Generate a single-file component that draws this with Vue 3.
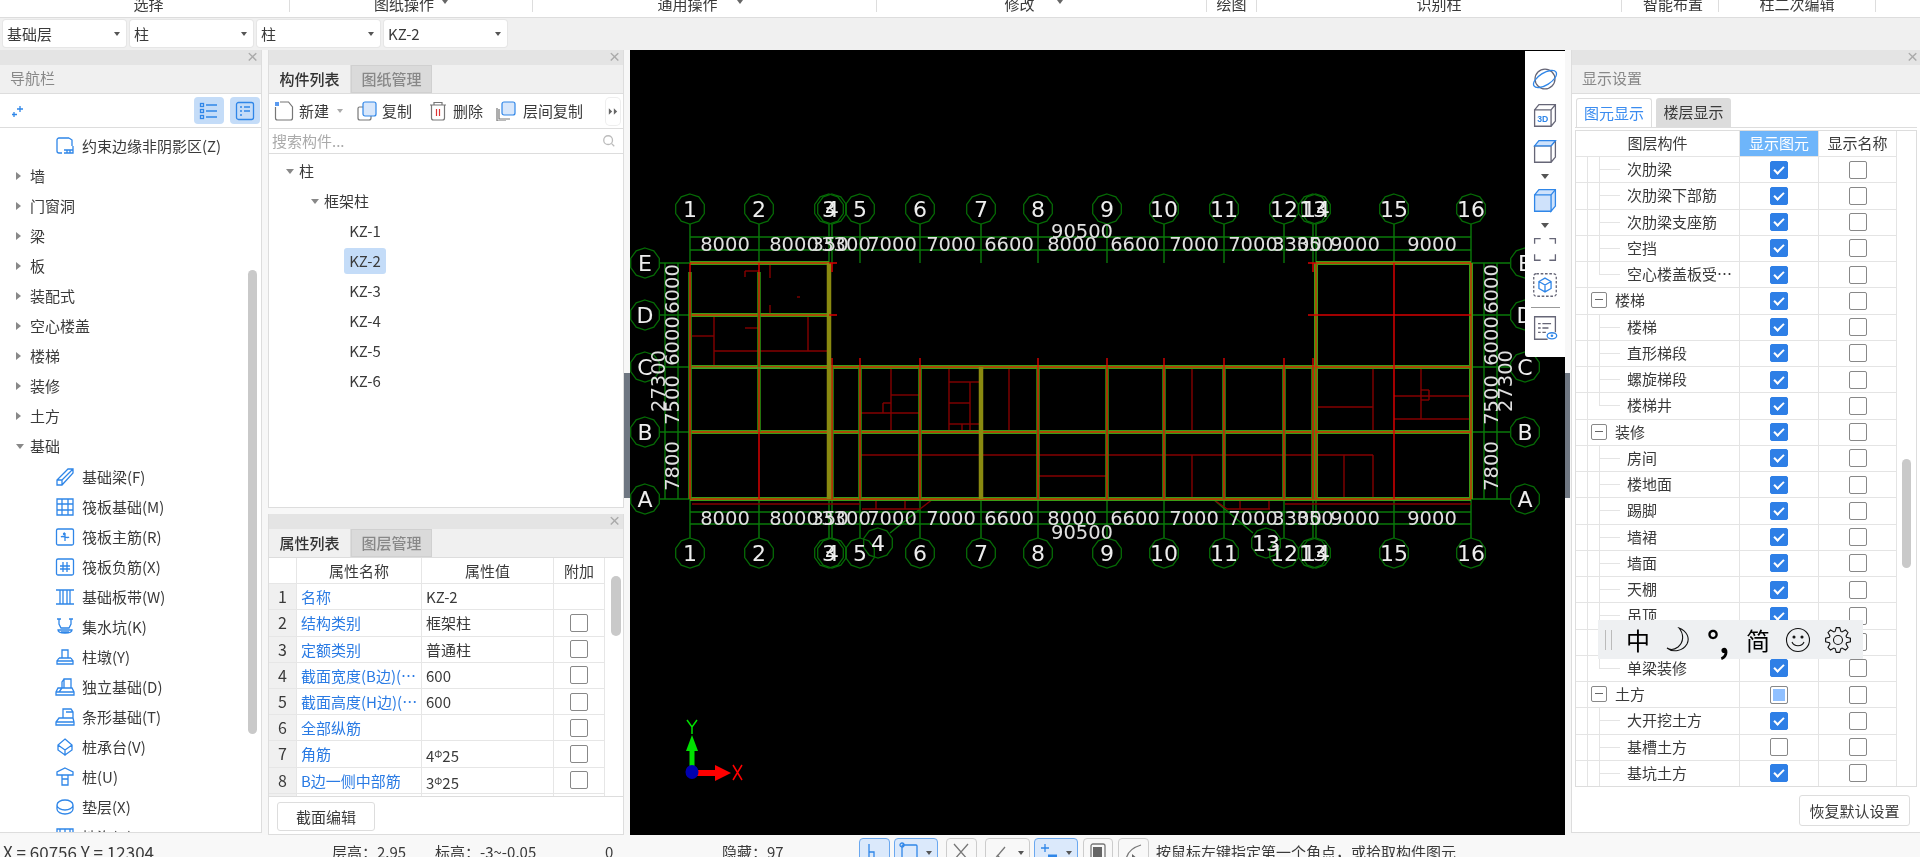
<template>
  <div class="app">
    <div class="ribbon">
      <div v-for="s in ribbon" :key="s.t" class="ribbon-sec" :style="{ width: s.w + 'px', paddingLeft: (s.pl || 0) + 'px', paddingRight: (s.pr || 0) + 'px' }">{{ s.t }}<span v-if="s.c" class="mini-caret" :style="{ marginLeft: s.c + 'px' }"></span></div>
    </div>

    <div class="selectors">
      <div v-for="(s, i) in selectors" :key="i" class="select">{{ s }}<span class="caret"></span></div>
    </div>

    <div class="workspace">
      <!-- 导航栏 -->
      <section class="panel nav">
        <div class="grip"><span class="close">×</span></div>
        <div class="title">导航栏</div>
        <div class="nav-tools">
          <svg class="sparkle" viewBox="0 0 14 14"><path d="M9 2v6M6 5h6M3 8v5M1 10.5h5" /></svg>
          <span class="tool-on"><svg viewBox="0 0 20 20"><path d="M7 4h11M7 10h11M7 16h11" /><rect x="1.5" y="2.5" width="3" height="3" /><rect x="1.5" y="8.5" width="3" height="3" /><rect x="1.5" y="14.5" width="3" height="3" /></svg></span>
          <span class="tool-on"><svg viewBox="0 0 20 20"><rect x="1.5" y="1.5" width="17" height="17" rx="2" /><path d="M5 6h2M9 6h6M5 10h2M9 10h6M5 14h2" /></svg></span>
        </div>
        <div class="nav-list">
          <div v-for="n in navItems" :key="n.t" class="nav-row" :class="{ sub: n.icon }">
            <span v-if="n.arrow" class="arrow" :class="n.arrow"></span>
            <svg v-if="n.icon" class="nav-icon" viewBox="0 0 20 20"><path :d="icons[n.icon]" /></svg>
            <span>{{ n.t }}</span>
          </div>
          <div class="nav-scroll"></div>
        </div>
      </section>

      <div class="mid">
        <section class="panel parts">
          <div class="grip"><span class="close">×</span></div>
          <div class="tabs">
            <span class="tab on">构件列表</span><span class="tab">图纸管理</span>
          </div>
          <div class="part-tools">
            <svg class="t-icon" viewBox="0 0 20 20"><path class="grey" d="M1.5 6v11a2 2 0 0 0 2 2h13a2 2 0 0 0 2-2V6l-4-5H6" /><rect class="blue-fill" x="1" y="1" width="4" height="4" /></svg>
            <span class="t-txt">新建</span><span class="caret light"></span>
            <svg class="t-icon copy" viewBox="0 0 20 20"><path class="grey" d="M6 6H2.5A1.5 1.5 0 0 0 1 7.500V17a2 2 0 0 0 2 2h9a2 2 0 0 0 2-2v-2" /><rect class="blue-soft" x="6" y="1" width="13" height="14" rx="2" /></svg>
            <span class="t-txt">复制</span>
            <svg class="t-icon del" viewBox="0 0 20 20"><path class="grey" d="M2 4h16M6 4V1.500h8V4M3.500 4v13a2 2 0 0 0 2 2h9a2 2 0 0 0 2-2V4" /><path class="red" d="M8.500 8v7M11.500 8v7" /></svg>
            <span class="t-txt">删除</span>
            <svg class="t-icon floor" viewBox="0 0 20 20"><path class="grey" d="M3 8v10h11M1 7v13h9" /><rect class="blue-soft" x="6" y="1" width="13" height="13" rx="2" /></svg>
            <span class="t-txt">层间复制</span>
            <span class="more"><svg viewBox="0 0 12 10"><path d="M1 1l4 4-4 4zM7 1l4 4-4 4z" /></svg></span>
          </div>
          <div class="search">
            <span>搜索构件...</span>
            <svg viewBox="0 0 16 16"><circle cx="7" cy="7" r="5" /><path d="M11 11l3 3" /></svg>
          </div>
          <div class="tree">
            <div class="tree-row lvl0"><span class="arrow down"></span>柱</div>
            <div class="tree-row lvl1"><span class="arrow down"></span>框架柱</div>
            <div v-for="k in kz" :key="k" class="tree-row lvl2"><span class="kz" :class="{ sel: k === 'KZ-2' }">{{ k }}</span></div>
          </div>
        </section>

        <section class="panel props">
          <div class="grip"><span class="close">×</span></div>
          <div class="tabs">
            <span class="tab on">属性列表</span><span class="tab">图层管理</span>
          </div>
          <div class="prop-wrap">
            <div class="prop-table">
              <div class="prop-row head"><span></span><span>属性名称</span><span>属性值</span><span>附加</span></div>
              <div v-for="(p, i) in propRows" :key="p.n" class="prop-row">
                <span class="num">{{ i + 1 }}</span>
                <span class="pname">{{ p.n }}</span>
                <span class="pval">{{ p.v }}<small v-if="p.bar">Φ</small>{{ p.bar }}</span>
                <span class="pchk"><i v-if="i > 0" class="box"></i></span>
              </div>
            </div>
            <div class="prop-scroll"><i></i></div>
          </div>
          <div class="prop-foot"><button class="btn">截面编辑</button></div>
        </section>
      </div>

      <div class="splitter"></div>

      <!-- CAD 绘图区 -->
      <div class="canvas">
        <svg class="drawing" viewBox="630 50 935 785" width="935" height="785">
          <g class="axis">
            <line x1="690" y1="237" x2="1471" y2="237" /><line x1="690" y1="250" x2="1471" y2="250" />
            <line x1="690" y1="512" x2="1471" y2="512" /><line x1="690" y1="524" x2="1471" y2="524" />
            <line x1="665" y1="263" x2="665" y2="499" /><line x1="678" y1="263" x2="678" y2="499" />
            <line x1="1484" y1="263" x2="1484" y2="499" /><line x1="1497" y1="263" x2="1497" y2="499" />
            <template v-for="c in cols" :key="'c' + c.n">
              <line :x1="c.x" y1="224" :x2="c.x" y2="263" />
              <line :x1="c.x" y1="499" :x2="c.x" y2="538" />
            </template>
            <template v-for="r in rows" :key="'r' + r.n">
              <line x1="660" :y1="r.y" x2="690" :y2="r.y" />
              <line x1="1471" :y1="r.y" x2="1510" :y2="r.y" />
            </template>
            <line x1="920" y1="509" x2="890" y2="533" /><line x1="1213" y1="499" x2="1253" y2="533" />
          </g>
          <g class="thin-red">
            <line v-for="(l, i) in darkLines" :key="'d' + i" :x1="l[0]" :y1="l[1]" :x2="l[2]" :y2="l[3]" />
          </g>
          <g class="beam">
            <line v-for="(l, i) in beams" :key="'o' + i" :x1="l[0]" :y1="l[1]" :x2="l[2]" :y2="l[3]" />
          </g>
          <g class="beam-core">
            <line v-for="(l, i) in beams" :key="'k' + i" :x1="l[0]" :y1="l[1]" :x2="l[2]" :y2="l[3]" />
          </g>
          <g class="col-green">
            <line v-for="(l, i) in colBeams" :key="'g' + i" :x1="l[0]" :y1="l[1]" :x2="l[2]" :y2="l[3]" />
          </g>
          <g class="col-red">
            <line v-for="(l, i) in colBeams" :key="'r' + i" :x1="l[0]" :y1="l[1] - 9" :x2="l[2]" :y2="l[3]" />
          </g>
          <g class="beam-thick">
            <line x1="829" y1="263" x2="829" y2="499" /><line x1="981" y1="367" x2="981" y2="499" />
          </g>
          <g class="bright-red">
            <line v-for="(l, i) in redLines" :key="'b' + i" :x1="l[0]" :y1="l[1]" :x2="l[2]" :y2="l[3]" />
          </g>
          <line x1="692" y1="368" x2="780" y2="368" stroke="#33b533" stroke-width="1" />
          <g class="tags">
            <polygon v-for="b in bubbles" :key="'p' + b.t + b.x + b.y" :points="deca(b.x, b.y)" />
          </g>
          <g class="bubble-text">
            <text v-for="b in bubbles" :key="'t' + b.t + b.x + b.y" :x="b.x" :y="b.y + 8">{{ b.t }}</text>
          </g>
          <g class="dim">
            <text v-for="(d, i) in dimsH" :key="'h' + i" :x="d[0]" y="251">{{ d[1] }}</text>
            <text v-for="(d, i) in dimsH" :key="'j' + i" :x="d[0]" y="525">{{ d[1] }}</text>
            <text x="1082" y="238">90500</text>
            <text x="1082" y="539">90500</text>
            <text v-for="d in dimsV" :key="'vl' + d[0]" :transform="`translate(679 ${d[0]}) rotate(-90)`">{{ d[1] }}</text>
            <text v-for="d in dimsV" :key="'vr' + d[0]" :transform="`translate(1498 ${d[0]}) rotate(-90)`">{{ d[1] }}</text>
            <text transform="translate(665 381) rotate(-90)">27300</text>
            <text transform="translate(1512 381) rotate(-90)">27300</text>
          </g>
          <g>
            <line x1="692" y1="772" x2="692" y2="750" stroke="#00e000" stroke-width="5" />
            <polygon points="692,735 686,751 698,751" fill="#00e000" />
            <line x1="692" y1="773" x2="716" y2="773" stroke="#f00" stroke-width="6" />
            <polygon points="731,773 715,765 715,781" fill="#f00" />
            <ellipse cx="692" cy="772" rx="6.500" ry="7" fill="#0000b0" />
            <path d="M687 720l5 7 5-7M692 727v7" stroke="#00e000" stroke-width="1.500" fill="none" />
            <path d="M733 765l9 15M742 765l-9 15" stroke="#f00" stroke-width="1.500" fill="none" />
          </g>
        </svg>

        <div class="view-tools">
          <svg viewBox="0 0 30 30"><circle cx="15" cy="15" r="11.500" class="g" /><ellipse cx="15" cy="15" rx="15" ry="7" transform="rotate(-32 15 15)" class="b" /></svg>
          <svg viewBox="0 0 30 30"><path class="g" d="M3 9h19v19H3zM3 9l5-6h19v19l-5 6M22 9l5-6" /><text x="12.500" y="23" class="t3d">3D</text></svg>
          <svg viewBox="0 0 30 30"><path class="g" d="M3 9h19v19H3zM22 28l5-6V3M22 9l5-6" /><path class="sf" d="M3 9l5-6h19l-5 6z" /></svg>
          <span class="dn"></span>
          <svg viewBox="0 0 30 30"><path class="sf" d="M3 9h19v19H3zM3 9l5-6h19v19l-5 6V9" /><path class="b" d="M22 9l5-6" /></svg>
          <span class="dn"></span>
          <svg viewBox="0 0 30 30"><path class="g" d="M3 9V3h7M20 3h7v6M27 21v7h-7M10 28H3v-7" /></svg>
          <svg viewBox="0 0 30 30"><rect class="g dash" x="2" y="2" width="26" height="26" rx="3" /><path class="b" d="M15 7l7 4v8l-7 4-7-4v-8zM8 11l7 4 7-4M15 15v8" /></svg>
          <i class="sep"></i>
          <svg viewBox="0 0 30 30"><path class="g" d="M18 28H3V2h24v18M7 10h3M12 10h10M7 15h3M12 15h7M7 20h3M12 20h4" /><ellipse class="b" cx="23" cy="24" rx="5.500" ry="3.500" /><circle cx="23" cy="24" r="1.500" fill="#2f86e8" /></svg>
        </div>
      </div>

      <div class="splitter right"></div>

      <!-- 显示设置 -->
      <section class="panel display">
        <div class="grip"><span class="close">×</span></div>
        <div class="title">显示设置</div>
        <div class="display-body">
          <div class="d-tabs"><span class="d-tab on">图元显示</span><span class="d-tab">楼层显示</span></div>
          <div class="d-table">
            <div class="d-main">
              <div class="d-row head">
                <span>图层构件</span><span class="hl">显示图元</span><span>显示名称</span>
              </div>
              <div v-for="(r, i) in layerRows" :key="i" class="d-row">
                <span class="d-name" :class="r.kind"><i v-if="r.kind === 'parent'" class="minus"></i>{{ r.t }}</span>
                <span class="d-c"><i class="box lg" :class="r.s"></i></span>
                <span class="d-c"><i class="box lg"></i></span>
              </div>
            </div>
            <div class="d-scroll"><i></i></div>
          </div>
          <div class="d-foot"><button class="btn wide">恢复默认设置</button></div>
        </div>
      </section>
    </div>

    <div class="status">
      <span class="st coord">X = 60756 Y = 12304</span>
      <span class="st h1">层高：2.95</span>
      <span class="st h2">标高：-3~-0.05</span>
      <span class="st h3">0</span>
      <span class="st h4">隐藏：97</span>
      <span class="snap on w31"><svg viewBox="0 0 20 20"><path d="M5 2v14h9M5 10h5v6" /></svg></span>
      <span class="snap on w44"><svg viewBox="0 0 20 20"><rect x="3" y="3" width="15" height="18" rx="1" /><circle cx="3" cy="3" r="2" /></svg><b></b></span>
      <span class="snap w31 grey-s gap"><svg viewBox="0 0 20 20"><path d="M3 2l14 16M17 2L3 18" /></svg></span>
      <span class="snap w45 grey-s gap"><svg viewBox="0 0 20 20"><path d="M4 18L15 5M7 13l3 3" /></svg><b></b></span>
      <span class="snap on w44"><svg viewBox="0 0 20 20"><path d="M6 2v8M2 6h8" /><path class="thick" d="M9 14h9" /></svg><b></b></span>
      <span class="snap w30 grey-s gap1"><svg viewBox="0 0 20 20"><rect x="3" y="2" width="14" height="18" rx="2" /><rect class="solid" x="5" y="5" width="9" height="14" /></svg></span>
      <span class="snap w31 grey-s gap1"><svg viewBox="0 0 20 20"><path d="M3 20C3 12 8 6 18 3" /><path class="solid" d="M9 12l6 5-6 3z" /></svg></span>
      <span class="hint">按鼠标左键指定第一个角点，或拾取构件图元</span>
    </div>

    <!-- 输入法状态条 -->
    <div class="ime">
      <i class="ime-grip"></i>
      <span class="ime-cell">中</span>
      <span class="ime-cell"><svg viewBox="0 0 26 26"><path d="M14 1c5 6 5 14-1 19-4 3-8 3-11 1 6 5 16 3 20-4 3-6 0-13-8-16z" /></svg></span>
      <span class="ime-cell dots">°,</span>
      <span class="ime-cell">简</span>
      <span class="ime-cell"><svg viewBox="0 0 26 26"><circle cx="13" cy="13" r="11.500" /><circle cx="9" cy="10" r="1" class="dot" /><circle cx="17" cy="10" r="1" class="dot" /><path d="M7 15c2 5 10 5 12 0" /></svg></span>
      <span class="ime-cell"><svg viewBox="0 0 26 26"><path :d="gearPath" /><circle cx="13" cy="13" r="4.500" /></svg></span>
    </div>
  </div>
</template>

<script setup>
const ribbon = [
  { t: '选择', w: 290, pl: 8 }, { t: '图纸操作', w: 243, c: 8 }, { t: '通用操作', w: 344, c: 19, pr: 9 },
  { t: '修改', w: 330, c: 22, pr: 16 }, { t: '绘图', w: 50 }, { t: '识别柱', w: 365 },
  { t: '智能布置', w: 97, pl: 6 }, { t: '柱二次编辑', w: 157 },
]
const selectors = ['基础层', '柱', '柱', 'KZ-2']

const icons = {
  edge: 'M14 2H4a2 2 0 0 0-2 2v11a2 2 0 0 0 2 2h3M14 2l3 2v6M9 17h9v-7M9 14h9M12 14v3M15 14v3',
  beam: 'M2 18v-5L13 2h5v4L7 18zM2 13h5v5M7 13L18 2',
  raft: 'M2 2h16v16H2zM2 7h16M2 13h16M7 2v16M13 2v16',
  main: 'M3 2h14a1.500 1.500 0 0 1 1.500 1.500v13A1.500 1.500 0 0 1 17 18H3a1.500 1.500 0 0 1-1.500-1.500v-13A1.500 1.500 0 0 1 3 2zM10 6v8M6 10c2-2 6 2 8 0M10 6c-2 0-2 2 0 2',
  neg: 'M3 2h14a1.500 1.500 0 0 1 1.500 1.500v13A1.500 1.500 0 0 1 17 18H3a1.500 1.500 0 0 1-1.500-1.500v-13A1.500 1.500 0 0 1 3 2zM8 5v10M12 5v10M5 9h10M5 12h10',
  strip: 'M1 3h18M1 17h18M5 3v14M8 3v14M12 3v14M15 3v14',
  pit: 'M4 2v5l2 4h8l2-4V2M2 2h4M14 2h4M3 13c0 4 14 4 14 0zM6 15h8',
  pier: 'M7 3h6v8H7zM4 11h12M2 14h16v3H2zM4 11l-2 3M16 11l2 3',
  found: 'M9 2h7v9H9zM9 2L7 5v6M3 11h14l2 4v3H1v-3zM1 15h18M7 11l-3 4',
  strp: 'M8 2h8l2 3v6H8zM8 2v9M4 11h14l1 4v3H1v-3zM1 15h18M11 5h7',
  cap: 'M10 2l7 6v5l-7 5-7-5V8zM3 8l7 5 7-5M10 13v6',
  pile: 'M10 1l8 4v3H2V5zM7 8v10h6V8M7 12h6',
  bed: 'M2 8c0-3 4-5 8-5s8 2 8 5-4 5-8 5-8-2-8-5zM2 8v4c0 3 4 5 8 5s8-2 8-5V8',
  ditch: 'M2 2h16v6H2zM5 2v6M10 2v6M15 2v6',
}

const navItems = [
  { t: '约束边缘非阴影区(Z)', icon: 'edge' },
  { t: '墙', arrow: 'right' }, { t: '门窗洞', arrow: 'right' }, { t: '梁', arrow: 'right' },
  { t: '板', arrow: 'right' }, { t: '装配式', arrow: 'right' }, { t: '空心楼盖', arrow: 'right' },
  { t: '楼梯', arrow: 'right' }, { t: '装修', arrow: 'right' }, { t: '土方', arrow: 'right' },
  { t: '基础', arrow: 'down' },
  { t: '基础梁(F)', icon: 'beam' }, { t: '筏板基础(M)', icon: 'raft' }, { t: '筏板主筋(R)', icon: 'main' },
  { t: '筏板负筋(X)', icon: 'neg' }, { t: '基础板带(W)', icon: 'strip' }, { t: '集水坑(K)', icon: 'pit' },
  { t: '柱墩(Y)', icon: 'pier' }, { t: '独立基础(D)', icon: 'found' }, { t: '条形基础(T)', icon: 'strp' },
  { t: '桩承台(V)', icon: 'cap' }, { t: '桩(U)', icon: 'pile' }, { t: '垫层(X)', icon: 'bed' },
  { t: '地沟(G)', icon: 'ditch' },
]

const kz = ['KZ-1', 'KZ-2', 'KZ-3', 'KZ-4', 'KZ-5', 'KZ-6']

const propRows = [
  { n: '名称', v: 'KZ-2' },
  { n: '结构类别', v: '框架柱' },
  { n: '定额类别', v: '普通柱' },
  { n: '截面宽度(B边)(mm)', v: '600' },
  { n: '截面高度(H边)(mm)', v: '600' },
  { n: '全部纵筋', v: '' },
  { n: '角筋', v: '4', bar: '25' },
  { n: 'B边一侧中部筋', v: '3', bar: '25' },
  { n: 'H边一侧中部筋', v: '3', bar: '25' },
]

const layerNames = [
  ['次肋梁', 'child'], ['次肋梁下部筋', 'child'], ['次肋梁支座筋', 'child'], ['空挡', 'child'], ['空心楼盖板受力筋', 'last'],
  ['楼梯', 'parent'], ['楼梯', 'child'], ['直形梯段', 'child'], ['螺旋梯段', 'child'], ['楼梯井', 'last'],
  ['装修', 'parent'], ['房间', 'child'], ['楼地面', 'child'], ['踢脚', 'child'], ['墙裙', 'child'], ['墙面', 'child'],
  ['天棚', 'child'], ['吊顶', 'child'], ['独立柱装修', 'child'], ['单梁装修', 'last'],
  ['土方', 'parent'], ['大开挖土方', 'child'], ['基槽土方', 'child'], ['基坑土方', 'child'],
]
const layerRows = layerNames.map(([t, kind]) => ({
  t, kind,
  s: t === '土方' ? 'part' : t === '基槽土方' ? '' : 'checked',
}))

const cols = [
  { n: '1', x: 690 }, { n: '2', x: 759 }, { n: '3', x: 829 }, { n: '4', x: 832 }, { n: '5', x: 860 },
  { n: '6', x: 920 }, { n: '7', x: 981 }, { n: '8', x: 1038 }, { n: '9', x: 1107 }, { n: '10', x: 1164 },
  { n: '11', x: 1224 }, { n: '12', x: 1284 }, { n: '13', x: 1313 }, { n: '14', x: 1316 }, { n: '15', x: 1394 }, { n: '16', x: 1471 },
]
const rows = [{ n: 'E', y: 263 }, { n: 'D', y: 315 }, { n: 'C', y: 367 }, { n: 'B', y: 432 }, { n: 'A', y: 499 }]

const bubbles = [
  ...cols.flatMap(c => [{ t: c.n, x: c.x, y: 209 }, { t: c.n, x: c.x, y: 553 }]),
  ...rows.flatMap(r => [{ t: r.n, x: 645, y: r.y }, { t: r.n, x: 1525, y: r.y }]),
  { t: '4', x: 878, y: 543 }, { t: '13', x: 1266, y: 543 },
]

// 十边形轴号圈
function deca(cx, cy, r = 15) {
  const pts = []
  for (let i = 0; i < 10; i++) {
    const a = (Math.PI * 2 * i) / 10 - Math.PI / 2
    pts.push(`${(cx + r * Math.cos(a)).toFixed(1)},${(cy + r * Math.sin(a)).toFixed(1)}`)
  }
  return pts.join(' ')
}

const beams = [
  [690, 263, 829, 263], [1316, 263, 1471, 263], [690, 315, 829, 315],
  [690, 367, 1471, 367], [690, 432, 1471, 432], [690, 499, 1471, 499],
  [1316, 263, 1316, 499], [1471, 263, 1471, 499],
]
const colBeams = [
  [690, 272, 690, 499], [759, 272, 759, 432], [832, 367, 832, 499], [860, 367, 860, 499],
  [920, 367, 920, 499], [1038, 367, 1038, 499], [1107, 367, 1107, 499], [1164, 367, 1164, 499],
  [1224, 367, 1224, 499], [1284, 367, 1284, 499], [1313, 367, 1313, 499],
]
const redLines = [
  [759, 432, 759, 499], [1394, 263, 1394, 499], [1308, 315, 1471, 315],
  [829, 263, 837, 263], [832, 263, 832, 272], [829, 315, 837, 315], [1308, 263, 1316, 263], [1313, 263, 1313, 272],
]
const darkLines = [
  [745, 271, 759, 271], [745, 271, 745, 277], [770, 263, 770, 278], [770, 305, 770, 315], [797, 297, 800, 297],
  [714, 315, 714, 367], [692, 336, 714, 336], [714, 351, 829, 351], [808, 315, 808, 351], [745, 328, 759, 328],
  [891, 367, 891, 432], [891, 395, 920, 395], [860, 413, 920, 413], [883, 403, 891, 403], [883, 403, 883, 413],
  [949, 367, 949, 432], [949, 382, 981, 382], [970, 382, 970, 432], [949, 403, 970, 403], [949, 424, 981, 424], [962, 424, 962, 432],
  [1009, 367, 1009, 432], [860, 455, 1373, 455], [1373, 455, 1373, 499], [1344, 455, 1344, 499], [1039, 476, 1107, 476],
  [1192, 367, 1192, 432], [1192, 455, 1192, 499], [1317, 407, 1373, 407], [1373, 367, 1373, 432],
  [1421, 367, 1421, 419], [1394, 396, 1471, 396], [1394, 419, 1471, 419], [1421, 390, 1429, 390], [1429, 390, 1429, 400], [1421, 400, 1429, 400],
  [692, 504, 860, 504], [862, 509, 920, 509], [920, 509, 933, 499], [876, 499, 876, 509], [905, 499, 905, 509],
  [1213, 499, 1227, 509], [1227, 509, 1270, 509], [1240, 499, 1240, 509], [1269, 499, 1269, 509], [1285, 504, 1471, 504],
]
const dimsH = [
  [725, '8000'], [794, '8000'], [830, '350'], [846, '3300'], [892, '7000'], [951, '7000'], [1009, '6600'], [1072, '8000'],
  [1135, '6600'], [1194, '7000'], [1253, '7000'], [1297, '3300'], [1315, '350'], [1355, '9000'], [1432, '9000'],
]
const dimsV = [[289, '6000'], [341, '6000'], [400, '7500'], [466, '7800']]

// 输入法条上的齿轮轮廓
const gearPath = (() => {
  const n = 8
  const cx = 13
  let d = ''
  for (let i = 0; i < n; i++) {
    const step = (Math.PI * 2) / n
    const a = i * step
    const pts = [[9, -0.32], [12.500, -0.14], [12.500, 0.14], [9, 0.32]]
    pts.forEach(([r, o], j) => {
      const x = cx + r * Math.cos(a + o)
      const y = cx + r * Math.sin(a + o)
      d += `${i === 0 && j === 0 ? 'M' : 'L'}${x.toFixed(2)} ${y.toFixed(2)}`
    })
  }
  return d + 'Z'
})()
</script>

<style>
html, body { margin: 0; background: #f7f7f7; }
</style>

<style scoped>
.app {
  position: relative;
  width: 1920px;
  height: 857px;
  overflow: hidden;
  background: #f8f8f8;
  color: #3a3a3a;
  font: 15px/1.2 "Noto Sans CJK SC", "Noto Sans", sans-serif;
  filter: blur(0.5px);
}

/* 顶部功能区只露出底边 */
.ribbon { display: flex; height: 17px; background: #fff; border-bottom: 1px solid #ddd; overflow: hidden; box-sizing: content-box; }
.ribbon-sec { height: 12px; line-height: 8px; text-align: center; border-right: 1px solid #ddd; box-sizing: border-box; flex: none; }
.mini-caret { display: inline-block; vertical-align: 3px; border: 3px solid transparent; border-top: 4px solid #666; }

.selectors { display: flex; gap: 4px; height: 32px; padding: 2px 0 0 3px; box-sizing: border-box; background: #f0f0f0; }
.select { position: relative; width: 123px; height: 27px; line-height: 27px; padding-left: 4px; box-sizing: border-box; background: #fff; border-radius: 3px; box-shadow: 0 0 0 1px #e6e6e6; }
.caret { position: absolute; right: 6px; top: 12px; border: 3.500px solid transparent; border-top: 4px solid #555; border-bottom: 0; }
.caret.light { position: static; display: block; margin: 0 14px 0 8px; border-top-color: #aaa; }

.workspace { display: flex; height: 785px; background: #f7f7f7; }

.panel { display: flex; flex-direction: column; background: #fff; box-sizing: border-box; border: solid #ddd; border-width: 0 1px 1px 1px; }
.grip { flex: none; height: 15px; background: #e4e4e4; text-align: right; position: relative; }
.close { position: absolute; right: 3px; top: -3px; font: 19px/19px "Liberation Sans", sans-serif; color: #aaa; }
.title { flex: none; height: 28px; line-height: 26px; padding-left: 10px; background: #f0f0f0; color: #888; border-bottom: 1px solid #ddd; }

.nav { width: 262px; height: 783px; flex: none; border-left: 0; }
.nav-tools { flex: none; height: 33px; display: flex; align-items: center; gap: 6px; padding-right: 1px; border-bottom: 1px solid #ddd; box-sizing: content-box; }
.sparkle { width: 14px; height: 14px; margin: 0 auto 0 11px; fill: none; stroke: #2f86e8; stroke-width: 1.300; }
.tool-on { width: 30px; height: 27px; display: flex; align-items: center; justify-content: center; background: #c4dcf8; border-radius: 4px; }
.tool-on svg { width: 20px; height: 20px; fill: none; stroke: #2f86e8; stroke-width: 1.300; }

.nav-list { position: relative; flex: 1; overflow: hidden; padding-top: 3px; }
.nav-row { display: flex; align-items: center; height: 30.050px; padding-left: 30px; position: relative; white-space: nowrap; }
.nav-row.sub { padding-left: 55px; }
.nav-icon { width: 20px; height: 20px; margin-right: 7px; flex: none; fill: none; stroke: #2f86e8; stroke-width: 1.300; }
.nav-scroll { position: absolute; right: 4px; top: 142px; bottom: 100px; width: 9px; height: 464px; background: #c9c9c9; border-radius: 5px; }
.arrow { position: absolute; }
.nav-row .arrow { left: 16px; }
.arrow.right { border: 4px solid transparent; border-left: 5px solid #888; border-right: 0; }
.arrow.down { border: 4px solid transparent; border-top: 5px solid #888; border-bottom: 0; }

.mid { flex: none; width: 356px; margin-left: 6px; display: flex; flex-direction: column; gap: 6px; }
.parts { height: 458px; flex: none; }
.props { flex: 1; height: 319px; }

.tabs { flex: none; display: flex; height: 29px; background: #f0f0f0; border-bottom: 1px solid #ddd; box-sizing: border-box; }
.tab { width: 81px; text-align: center; line-height: 28px; background: #dadada; color: #888; font-weight: 500; box-shadow: inset 0 0 0 1px #d0d0d0; }
.tab.on { background: #f0f0f0; color: #333; box-shadow: none; border-right: 1px solid #ddd; }

.part-tools { flex: none; display: flex; align-items: center; height: 34px; padding-left: 5px; border-bottom: 1px solid #ddd; position: relative; box-sizing: content-box; }
.t-icon { width: 20px; height: 20px; margin-right: 5px; flex: none; }
.t-icon .grey { fill: none; stroke: #777; stroke-width: 1.200; }
.t-icon .blue-fill { fill: #5a9af0; }
.t-icon .blue-soft { fill: #d8e7fb; stroke: #2f86e8; stroke-width: 1.200; }
.t-icon .red { fill: none; stroke: #d33; stroke-width: 1.200; }
.t-txt { white-space: nowrap; }
.t-icon.del { margin-left: 16px; margin-right: 5px; }
.t-icon.floor { margin-left: 13px; margin-right: 7px; }
.more { position: absolute; right: 3px; top: 4px; width: 14px; height: 27px; display: flex; align-items: center; justify-content: center; border-radius: 4px; box-shadow: 0 0 0 1px #eee; }
.more svg { width: 10px; height: 9px; fill: #666; }

.search { flex: none; display: flex; justify-content: space-between; align-items: center; height: 24px; padding: 0 7px 0 3px; color: #aaa; border-bottom: 1px solid #ddd; }
.search svg { width: 14px; height: 14px; fill: none; stroke: #bbb; stroke-width: 1.500; }

.tree { flex: 1; padding-top: 2px; }
.tree-row { position: relative; height: 30px; display: flex; align-items: center; font-size: 15px; }
.lvl0 { padding-left: 30px; }
.lvl1 { padding-left: 55px; }
.lvl2 { padding-left: 75px; }
.tree-row .arrow { margin-left: -13px; }
.kz { display: block; width: 42px; height: 26px; line-height: 26px; text-align: center; border-radius: 3px; }
.kz.sel { background: #c4dcf8; }

.prop-wrap { flex: none; height: 238px; display: flex; overflow: hidden; border-bottom: 1px solid #ddd; }
.prop-table { width: 336px; flex: none; }
.prop-row { display: grid; grid-template-columns: 28px 125px 132px 51px; height: 26.200px; box-sizing: border-box; border-bottom: 1px solid #e6e6e6; }
.prop-row > span { border-right: 1px solid #e6e6e6; line-height: 25px; overflow: hidden; white-space: nowrap; text-overflow: ellipsis; }
.prop-row.head > span { text-align: center; }
.num { background: #f0f0f0; text-align: center; font-size: 16px; }
.pname { color: #2a7be4; padding-left: 4px; }
.pval { padding-left: 4px; }
.pval small { font-size: 10px; vertical-align: 4px; }
.pchk { display: flex; align-items: center; justify-content: center; }
.box { display: block; width: 18px; height: 18px; box-sizing: border-box; border: 1px solid #888; border-radius: 2px; background: #fff; }
.box.lg { width: 18px; height: 18px; }
.box.checked { position: relative; background: #2e7fe6; border-color: #2e7fe6; }
.box.checked::after { content: ""; position: absolute; left: 5px; top: 2px; width: 4px; height: 8px; border: solid #fff; border-width: 0 2px 2px 0; transform: rotate(45deg); }
.box.part { background: #90c0ff; box-shadow: inset 0 0 0 2px #fff; }
.prop-scroll { flex: 1; padding: 18px 4px 0 6px; }
.prop-scroll i { display: block; width: 10px; height: 60px; background: #c9c9c9; border-radius: 5px; }
.prop-foot { flex: 1; padding: 5px 8px; }
.btn { width: 98px; height: 29px; font: inherit; color: #3a3a3a; background: #fff; border: 1px solid #ddd; border-radius: 3px; padding: 0; }

.splitter { flex: none; width: 6px; display: flex; align-items: center; position: relative; }
.splitter::after { content: ""; width: 100%; height: 125px; margin-top: -15px; background: #6f7782; }
.splitter.right { width: 5px; }

.canvas { flex: none; width: 935px; height: 785px; position: relative; background: #000; overflow: hidden; }
.drawing { display: block; }
.axis line { stroke: #0a7a0a; stroke-width: 1.400; }
.thin-red line { stroke: #850000; stroke-width: 1.400; }
.bright-red line { stroke: #d80000; stroke-width: 1.500; }
.beam line { stroke: #3a9c14; stroke-width: 4; }
.beam-core line { stroke: #d03000; stroke-width: 1.400; }
.col-green line { stroke: #2f9a12; stroke-width: 3.500; }
.col-red line { stroke: #f00000; stroke-width: 1.300; }
.beam-thick line { stroke: #8a8a10; stroke-width: 4.500; }
.tags polygon { fill: none; stroke: #066a06; stroke-width: 1.300; }
.bubble-text text { font: 22px "DejaVu Sans", sans-serif; fill: #eee; text-anchor: middle; }
.dim text { font: 19.500px "DejaVu Sans", sans-serif; fill: #e0e0e0; text-anchor: middle; }

.view-tools { position: absolute; right: 0; top: 1px; width: 40px; height: 306px; padding-top: 15px; box-sizing: border-box; display: flex; flex-direction: column; align-items: center; background: #fff; border-radius: 0 0 0 3px; }
.view-tools svg { width: 26px; height: 26px; margin-bottom: 10px; fill: none; flex: none; overflow: visible; }
.view-tools .g { stroke: #667; stroke-width: 1.500; fill: none; }
.view-tools .dash { stroke-dasharray: 3 2; }
.view-tools .b { stroke: #2f86e8; stroke-width: 1.500; fill: none; }
.view-tools .sf { stroke: #2f86e8; stroke-width: 1.500; fill: #cfe2fb; }
.view-tools .t3d { font: bold 10px "Liberation Sans", sans-serif; fill: #2f86e8; text-anchor: middle; }
.view-tools .dn { flex: none; margin: 0 0 8px; border: 4px solid transparent; border-top: 5px solid #555; border-bottom: 0; }
.view-tools .sep { flex: none; width: 29px; height: 1px; background: #999; margin: -1px 0 7px; }

.display { flex: 1; height: 783px; margin-left: 1px; }
.display-body { flex: 1; display: flex; flex-direction: column; padding: 4px 4px 0 3px; }
.d-tabs { flex: none; display: flex; gap: 4px; height: 29px; padding-left: 1px; border-bottom: 1px solid #ddd; }
.d-tab { width: 75px; text-align: center; line-height: 28px; background: #dcdcdc; border-radius: 3px 3px 0 0; }
.d-tab.on { width: 76px; background: #fff; color: #3a8cf0; border: 1px solid #ddd; border-bottom: 0; box-sizing: border-box; }
.d-table { flex: none; height: 657px; display: flex; overflow: hidden; margin-top: 2px; border: 1px solid #ddd; box-sizing: border-box; }
.d-main { width: 321px; flex: none; overflow: hidden; }
.d-row { display: grid; grid-template-columns: 164px 79px 78px; height: 26.250px; box-sizing: border-box; border-bottom: 1px solid #e4e4e4; }
.d-row.head { height: 26px; }
.d-row > span { border-right: 1px solid #e4e4e4; line-height: 24px; white-space: nowrap; overflow: hidden; text-overflow: ellipsis; }
.d-row.head > span { text-align: center; }
.d-row.head .hl { background: #6eb5fa; color: #fff; }
.d-name { position: relative; padding-left: 51px; box-sizing: border-box; }
.d-name::before { content: ""; position: absolute; left: 11px; top: 0; bottom: 0; border-left: 1px solid #e4e4e4; }
.d-name.child::after, .d-name.last::after { content: ""; position: absolute; left: 23px; top: 0; width: 20px; height: 12px; border: solid #e4e4e4; border-width: 0 0 1px 1px; }
.d-name.child { background: linear-gradient(#e4e4e4, #e4e4e4) 23px 0 / 1px 100% no-repeat; }
.d-name.parent { padding-left: 39px; }
.d-c { display: flex; align-items: center; justify-content: center; }
.minus { position: absolute; left: 15px; top: 4px; width: 16px; height: 16px; box-sizing: border-box; border: 1px solid #888; border-radius: 2px; background: #fff; }
.minus::after { content: ""; position: absolute; left: 3px; right: 3px; top: 6px; height: 1px; background: #666; }
.d-scroll { flex: 1; padding: 328px 5px 0 5px; }
.d-scroll i { display: block; width: 9px; height: 109px; background: #c9c9c9; border-radius: 5px; }
.d-foot { flex: 1; display: flex; justify-content: flex-end; padding: 8px 7px 0 0; }
.btn.wide { width: 111px; height: 31px; }

.status { display: flex; align-items: flex-start; height: 22px; overflow: hidden; background: #f8f8f8; position: relative; border-top: 0; }
.st { flex: none; line-height: 22px; padding-top: 6px; white-space: nowrap; }
.coord { width: 329px; padding-left: 3px; font-size: 17px; box-sizing: content-box; }
.h1 { width: 103px; }
.h2 { width: 170px; }
.h3 { width: 117px; }
.h4 { width: 137px; }
.snap { position: relative; flex: none; height: 30px; margin: 3px 4px 0 0; box-sizing: border-box; border: 1px solid #ccc; border-radius: 4px; display: flex; padding: 3px 0 0 4px; }
.snap.on { background: #dbe9fb; border-color: #6aa8f0; }
.snap.gap { margin-left: 4px; }
.snap.gap1 { margin-left: 1px; }
.w31 { width: 31px; }
.w30 { width: 30px; }
.w44 { width: 44px; }
.w45 { width: 45px; }
.snap svg { width: 20px; height: 20px; fill: none; stroke: #777; stroke-width: 1.300; }
.snap.on svg { stroke: #2f86e8; }
.snap .thick { stroke-width: 3; }
.snap .solid { fill: #666; stroke: none; }
.snap b { position: absolute; right: 5px; top: 12px; border: 3px solid transparent; border-top: 4px solid #555; border-bottom: 0; }
.hint { flex: none; margin-left: 3px; line-height: 22px; padding-top: 6px; white-space: nowrap; }

.ime { position: absolute; left: 1598px; top: 620px; width: 265px; height: 39px; display: flex; align-items: center; background: #eef0f2; color: #000; }
.ime-grip { width: 5px; height: 20px; margin: 0 6px 0 7px; border: solid #bbb; border-width: 0 1px; flex: none; }
.ime-cell { width: 40px; height: 39px; flex: none; display: flex; align-items: center; justify-content: center; font-size: 24px; line-height: 1; }
.ime-cell svg { width: 26px; height: 26px; fill: none; stroke: #111; stroke-width: 1.100; }
.ime-cell svg .dot { fill: #111; }
.dots { font-size: 30px; font-weight: 700; }
</style>
